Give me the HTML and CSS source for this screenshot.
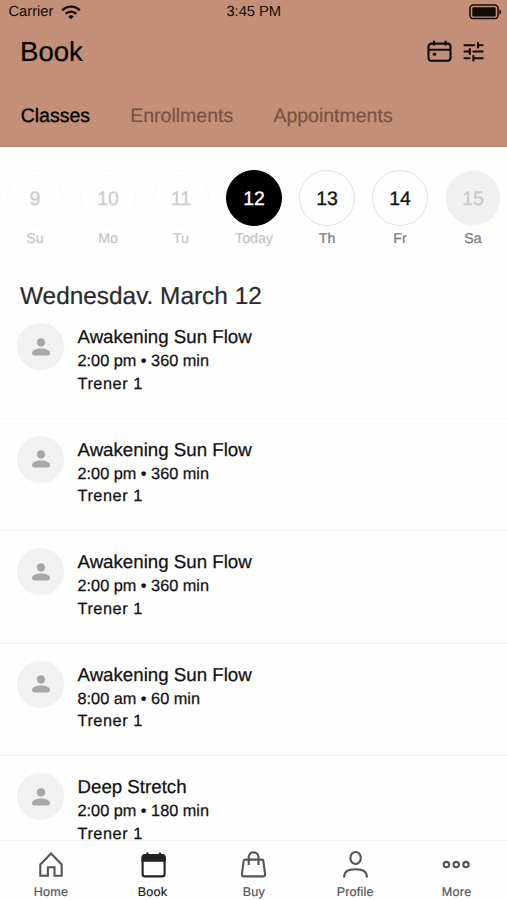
FILE: index.html
```html
<!DOCTYPE html>
<html lang="en">
<head>
<meta charset="utf-8">
<title>Book</title>
<link rel="stylesheet" href="styles.css">
</head>
<body>
<svg class="defs" width="0" height="0" aria-hidden="true">
  <symbol id="person" viewBox="0 0 20 20">
    <circle cx="10" cy="5.4" r="4.2"/>
    <path d="M1 16.3C1 13.100 5.500 11.600 10 11.600S19 13.100 19 16.300Q19 18.400 17 18.400H3Q1 18.400 1 16.300z"/>
  </symbol>
</svg>
<div class="app">
  <header class="header">
    <div class="status">
      <div class="status-left">
        <span>Carrier</span>
        <svg class="wifi" viewBox="0 0 20 15" width="20" height="15">
          <path class="arc" d="M1.2 5.4C6.2.4 13.8.4 18.8 5.4M4.6 8.9c3.1-3 7.7-3 10.8 0"/>
          <path d="M7.2 11.4c1.6-1.5 4-1.5 5.6 0L10 14.3z"/>
        </svg>
      </div>
      <span class="time">3:45 PM</span>
      <svg class="battery" viewBox="0 0 33 16" width="33" height="16">
        <rect class="case" x="1" y="1" width="28" height="13.6" rx="3.4"/>
        <rect x="3.3" y="3.2" width="23.4" height="9.2" rx="1"/>
        <path d="M30.4 5.200c2.200.7 2.200 4.600 0 5.300z"/>
      </svg>
    </div>
    <div class="title-row">
      <h1>Book</h1>
      <div class="actions">
        <svg class="calendar" viewBox="0 0 25 23" width="25" height="23">
          <rect x="1.5" y="3.6" width="22" height="17.2" rx="3"/>
          <path d="M1.5 9.7h22M7 .8v4.6M18.600.8v4.600"/>
          <circle class="dot" cx="7.500" cy="14.200" r="1.800"/>
        </svg>
        <svg class="sliders" viewBox="0 0 21 21" width="21" height="21">
          <path d="M1.500 4.300h9.800M15 4.300h4.600M15 2v4.600M1.500 10.500h5M6.800 8.100v4.900M10.400 10.500h9.200M1.500 17.200h5M10.400 17.200h9.200M10.400 14.800v4.800"/>
        </svg>
      </div>
    </div>
    <nav class="tabs">
      <span class="tab selected">Classes</span>
      <span class="tab">Enrollments</span>
      <span class="tab">Appointments</span>
    </nav>
  </header>

  <section class="week">
    <div class="day past"><span class="num">9</span><span class="name">Su</span></div>
    <div class="day past"><span class="num">10</span><span class="name">Mo</span></div>
    <div class="day past"><span class="num">11</span><span class="name">Tu</span></div>
    <div class="day today"><span class="num">12</span><span class="name">Today</span></div>
    <div class="day"><span class="num">13</span><span class="name">Th</span></div>
    <div class="day"><span class="num">14</span><span class="name">Fr</span></div>
    <div class="day closed"><span class="num">15</span><span class="name">Sa</span></div>
  </section>

  <main class="list">
    <h2>Wednesdav. March 12</h2>
    <article class="item">
      <div class="avatar"><svg width="20" height="20"><use href="#person"/></svg></div>
      <div class="info"><h3>Awakening Sun Flow</h3><p>2:00 pm • 360 min</p><p class="trainer">Trener 1</p></div>
    </article>
    <article class="item">
      <div class="avatar"><svg width="20" height="20"><use href="#person"/></svg></div>
      <div class="info"><h3>Awakening Sun Flow</h3><p>2:00 pm • 360 min</p><p class="trainer">Trener 1</p></div>
    </article>
    <article class="item">
      <div class="avatar"><svg width="20" height="20"><use href="#person"/></svg></div>
      <div class="info"><h3>Awakening Sun Flow</h3><p>2:00 pm • 360 min</p><p class="trainer">Trener 1</p></div>
    </article>
    <article class="item">
      <div class="avatar"><svg width="20" height="20"><use href="#person"/></svg></div>
      <div class="info"><h3>Awakening Sun Flow</h3><p>8:00 am • 60 min</p><p class="trainer">Trener 1</p></div>
    </article>
    <article class="item">
      <div class="avatar"><svg width="20" height="20"><use href="#person"/></svg></div>
      <div class="info"><h3>Deep Stretch</h3><p>2:00 pm • 180 min</p><p class="trainer">Trener 1</p></div>
    </article>
  </main>

  <nav class="bottom">
    <div class="link">
      <svg viewBox="0 0 28 28" width="28" height="28"><path d="M3.300 13.400 14 2.400l10.700 11v11.400h-7.200v-8.600h-6.600v8.600H3.300z"/></svg>
      <span>Home</span>
    </div>
    <div class="link active">
      <svg viewBox="0 0 28 28" width="28" height="28"><rect x="4.600" y="4.100" width="22" height="21.300" rx="2.500"/><path class="solid" d="M4.600 9.600V6.500q0-2.400 2.400-2.400h17.200q2.400 0 2.400 2.400v3.100z"/><path d="M9.300 1.500v3M22 1.500v3"/></svg>
      <span>Book</span>
    </div>
    <div class="link">
      <svg viewBox="0 0 28 28" width="28" height="28"><path d="M6 8.600h17c.7 0 1.200.4 1.300 1.100l1.800 13.500c.2 1.300-.6 2.200-1.800 2.200H4.700c-1.200 0-2-.9-1.800-2.200L4.700 9.700c.1-.7.6-1.100 1.300-1.100zM9.700 14V6.200c0-6.400 9.800-6.400 9.800 0V14"/></svg>
      <span>Buy</span>
    </div>
    <div class="link">
      <svg viewBox="0 0 28 28" width="28" height="28"><ellipse cx="14.600" cy="7" rx="5.200" ry="6"/><path d="M3.200 26.500v-1c0-4.900 4.500-7.300 11.300-7.300s11.300 2.400 11.300 7.300v1"/></svg>
      <span>Profile</span>
    </div>
    <div class="link">
      <svg viewBox="0 0 28 28" width="28" height="28"><circle cx="4.400" cy="13.600" r="2.700"/><circle cx="14.200" cy="13.600" r="2.700"/><circle cx="24" cy="13.600" r="2.700"/></svg>
      <span>More</span>
    </div>
  </nav>
</div>
</body>
</html>
```
FILE: styles.css
```css
* { box-sizing: border-box; }
body, h1, h2, h3, p { margin: 0; font-weight: 400; }
body {
  font-family: "Liberation Sans", Arial, sans-serif;
  color: #111;
  background: #fefefe;
  text-rendering: geometricPrecision;
}
svg { display: block; flex: none; fill: currentColor; overflow: visible; }
.defs { position: absolute; }
.app { display: flex; flex-direction: column; height: 900px; overflow: hidden; }

.header { flex: none; height: 147px; background: #c38f79; color: #120a07; border-bottom: 1px solid #b18470; }
.status {
  display: grid;
  grid-template-columns: 1fr auto 1fr;
  align-items: center;
  height: 24.5px;
  padding: 0 5px 0 8.5px;
  font-size: 14.7px;
}
.status-left { display: flex; align-items: center; gap: 8px; }
.arc { fill: none; stroke: currentColor; stroke-width: 2.4; }
.time { padding-right: 3px; }
.battery { justify-self: end; }
.case { fill: none; stroke: currentColor; stroke-width: 1.5; }
.title-row {
  display: flex;
  justify-content: space-between;
  align-items: center;
  height: 55.5px;
  padding: 0 24px 1px 20px;
}
h1 { font-size: 27.6px; color: #000; -webkit-text-stroke: .2px; }
.actions { display: flex; align-items: center; gap: 10px; }
.calendar, .sliders { fill: none; stroke: currentColor; stroke-width: 2.1; }
.calendar { margin-right: 1px; }
.sliders { stroke-linecap: round; margin-right: -1px; }
.dot { fill: currentColor; stroke: none; }
.tabs { display: flex; gap: 40.2px; height: 66px; padding: 24px 21px 0 20.7px; font-size: 19.5px; line-height: 24px; }
.tab { color: #7a5241; -webkit-text-stroke: .2px; }
.tab.selected { color: #000; -webkit-text-stroke: .3px; }

.week { flex: none; display: flex; gap: 17px; height: 127px; padding: 23px 0 0 7px; }
.day { display: flex; flex-direction: column; align-items: center; width: 56px; flex: none; }
.num {
  display: flex;
  align-items: center;
  justify-content: center;
  width: 56px;
  height: 56px;
  padding-top: 2px;
  border: 1px solid #e1e1e1;
  border-radius: 50%;
  font-size: 19.5px;
  -webkit-text-stroke: .3px;
}
.name { margin-top: 5px; font-size: 14.2px; line-height: 17px; color: #777; -webkit-text-stroke: .2px; }
.past .num { border-color: #fafafa; color: #ccc; }
.past .name, .today .name { color: #c4c4c4; }
.today .num { background: #000; border-color: #000; color: #fff; }
.closed .num { background: #f0f0f0; border-color: #fafafa; color: #c8c8c8; }

.list { flex: 1; min-height: 0; overflow: hidden; }
h2 { height: 32px; padding: 9px 0 0 20px; font-size: 24.4px; line-height: 28px; color: #2b2b2b; -webkit-text-stroke: .2px; }
.item { display: flex; gap: 13.5px; height: 112.5px; padding: 17px 17px 0; border-bottom: 1px solid #f5f5f5; }
h2 + .item { border-bottom-color: #f8f8f8; }
.avatar {
  display: flex;
  align-items: center;
  justify-content: center;
  flex: none;
  width: 47px;
  height: 47px;
  border-radius: 50%;
  background: #f1f1f1;
  color: #a7a7a7;
}
.info { padding-top: 2px; }
h3 { margin-bottom: 1px; font-size: 18.7px; line-height: 24px; -webkit-text-stroke: .25px; }
.info p { font-size: 16.3px; line-height: 22.5px; -webkit-text-stroke: .25px; }
.info .trainer { margin-top: 3px; line-height: 17px; letter-spacing: .55px; }

.bottom {
  flex: none;
  display: grid;
  grid-template-columns: repeat(5, 1fr);
  height: 60px;
  border-top: 1px solid #f3f3f3;
  background: #fefefe;
}
.link { display: flex; flex-direction: column; align-items: center; padding-top: 9.5px; font-size: 12.6px; letter-spacing: .2px; color: #555; }
.link svg { fill: none; stroke: currentColor; stroke-width: 2.1; }
.link .solid { fill: currentColor; }
.link span { margin-top: 6px; padding-left: .6px; line-height: 15px; -webkit-text-stroke: .2px; }
.active { color: #222; }
```
